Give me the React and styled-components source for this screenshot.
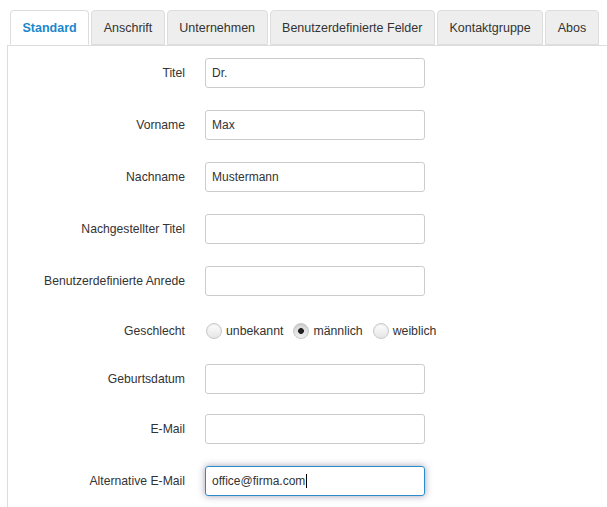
import React from 'react';
import styled, { createGlobalStyle } from 'styled-components';

const GlobalStyle = createGlobalStyle`
  html, body {
    margin: 0;
    padding: 0;
    background: #fff;
  }
  body {
    font-family: 'Liberation Sans', Arial, sans-serif;
    font-size: 12px;
    color: #333;
  }
`

const Page = styled.div`
  padding: 10px 0 0 7px;
  width: 600px;
`

const TabNav = styled.ul`
  display: flex;
  list-style: none;
  margin: 0;
  padding: 0 0 0 3px;
  border-bottom: 1px solid #ddd;
  height: 35px;
`

const Tab = styled.li`
  height: 35px;
  box-sizing: border-box;
  margin-right: 2px;
  margin-bottom: -1px;
  padding: 0 11.5px;
  display: flex;
  align-items: center;
  border: 1px solid #ddd;
  border-bottom: ${props => (props.$active ? '1px solid #fff' : '1px solid #ddd')};
  border-radius: 4px 4px 0 0;
  background: ${props => (props.$active ? '#fff' : '#eee')};
  color: ${props => (props.$active ? '#1a87cc' : '#333')};
  font-weight: ${props => (props.$active ? 'bold' : 'normal')};
  font-size: 12.5px;
  white-space: nowrap;
`

const Panel = styled.div`
  border-left: 1px solid #ddd;
  padding-top: 12px;
  height: 461px;
`

const Row = styled.div`
  display: grid;
  grid-template-columns: 177px 220px;
  column-gap: 20px;
  align-items: center;
  height: ${props => props.$height || 30}px;
  margin-bottom: ${props => props.$gap ?? 22}px;
`

const Label = styled.label`
  text-align: right;
  font-size: 12.2px;
  color: #333;
`

const Input = styled.input`
  box-sizing: border-box;
  width: 220px;
  height: 30px;
  border: 1px solid #ccc;
  border-radius: 3px;
  padding: 0 6px;
  font-family: 'Liberation Sans', Arial, sans-serif;
  font-size: 12px;
  color: #333;
  outline: none;
`

const FocusedBox = styled.div`
  box-sizing: border-box;
  width: 220px;
  height: 30px;
  border: 1px solid #2e8bc9;
  border-radius: 3px;
  padding: 0 6px;
  display: flex;
  align-items: center;
  font-size: 12px;
  color: #333;
  box-shadow: 0 0 7px rgba(60, 60, 110, 0.5);
`

const Caret = styled.span`
  display: inline-block;
  width: 1px;
  height: 14px;
  background: #000;
  margin-left: 1px;
`

const RadioGroup = styled.div`
  display: flex;
  align-items: center;
  margin-left: 1px;
`

const RadioOption = styled.label`
  display: flex;
  align-items: center;
  margin-right: 10px;
  font-size: 12.3px;
  color: #333;
`

const RadioCircle = styled.span`
  box-sizing: border-box;
  width: 16px;
  height: 16px;
  border-radius: 50%;
  border: 1px solid #c8c8c8;
  background: ${props =>
    props.$checked
      ? 'radial-gradient(circle at 50% 50%, #222 0, #222 2.6px, transparent 3.2px), linear-gradient(#d4d4d4, #eee)'
      : 'linear-gradient(#fdfdfd, #e6e6e6)'};
  box-shadow: inset 0 1px 1px rgba(0, 0, 0, 0.08);
  margin-right: 4px;
`

const fields = [
  { label: 'Titel', value: 'Dr.' },
  { label: 'Vorname', value: 'Max' },
  { label: 'Nachname', value: 'Mustermann' },
  { label: 'Nachgestellter Titel', value: '' },
  { label: 'Benutzerdefinierte Anrede', value: '' },
]

const tabs = ['Standard', 'Anschrift', 'Unternehmen', 'Benutzerdefinierte Felder', 'Kontaktgruppe', 'Abos']

const genders = [
  { label: 'unbekannt', checked: false },
  { label: 'männlich', checked: true },
  { label: 'weiblich', checked: false },
]

export default function App() {
  return (
    <Page>
      <GlobalStyle />
      <TabNav>
        {tabs.map((t, i) => (
          <Tab key={t} $active={i === 0}>{t}</Tab>
        ))}
      </TabNav>
      <Panel>
        {fields.map(f => (
          <Row key={f.label}>
            <Label>{f.label}</Label>
            <Input defaultValue={f.value} readOnly />
          </Row>
        ))}
        <Row $height={26} $gap={20}>
          <Label>Geschlecht</Label>
          <RadioGroup>
            {genders.map(g => (
              <RadioOption key={g.label}>
                <RadioCircle $checked={g.checked} />
                {g.label}
              </RadioOption>
            ))}
          </RadioGroup>
        </Row>
        <Row $gap={20}>
          <Label>Geburtsdatum</Label>
          <Input defaultValue="" readOnly />
        </Row>
        <Row>
          <Label>E-Mail</Label>
          <Input defaultValue="" readOnly />
        </Row>
        <Row>
          <Label>Alternative E-Mail</Label>
          <FocusedBox>
            office@firma.com
            <Caret />
          </FocusedBox>
        </Row>
      </Panel>
    </Page>
  )
}
